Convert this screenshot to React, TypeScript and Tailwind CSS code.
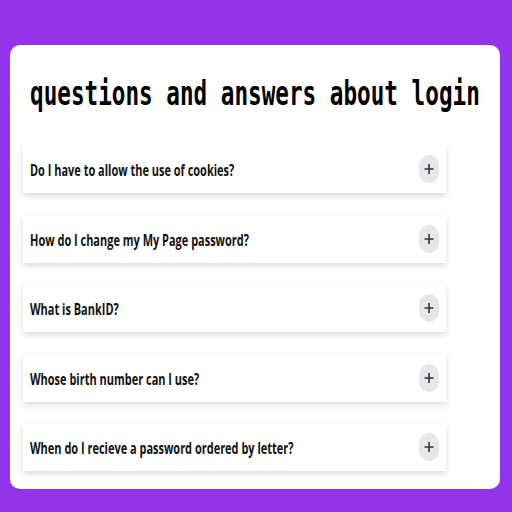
const questions = [
  'Do I have to allow the use of cookies?',
  'How do I change my My Page password?',
  'What is BankID?',
  'Whose birth number can I use?',
  'When do I recieve a password ordered by letter?',
];

function PlusButton() {
  return (
    <button className="w-[20px] h-[28px] rounded-full bg-gray-200 flex items-center justify-center shrink-0">
      <svg width="10" height="12" viewBox="0 0 10 12">
        <path d="M5 1v10M0.5 6h9" stroke="#333" strokeWidth="1.6" fill="none" />
      </svg>
    </button>
  );
}

export default function App() {
  return (
    <div className="h-[512px] w-[512px] bg-[#9333ea] pt-[45px] pl-[10px] pr-[12px]">
      <div className="bg-white rounded-[10px] h-[444px] overflow-hidden">
        {/* Title */}
        <h1 className="pt-[32px] pl-[20px] h-[100px] whitespace-nowrap">
          <span className="inline-block origin-left scale-x-[0.686] font-['DejaVu_Sans_Mono',monospace] text-[33px] leading-none font-bold text-black">
            questions and answers about login
          </span>
        </h1>

        {/* Questions */}
        <div className="ml-[13px] w-[423px] flex flex-col gap-[21.5px]">
          {questions.map((q) => (
            <div
              key={q}
              className="h-[48px] bg-white shadow-[0_3px_6px_rgba(0,0,0,0.14)] flex items-center justify-between pl-[7px] pr-[7px]"
            >
              <span className="inline-block origin-left scale-x-[0.686] font-['Open_Sans',sans-serif] text-[16px] font-bold text-[#111] whitespace-nowrap mt-[2px]">
                {q}
              </span>
              <PlusButton />
            </div>
          ))}
        </div>
      </div>
    </div>
  );
}
